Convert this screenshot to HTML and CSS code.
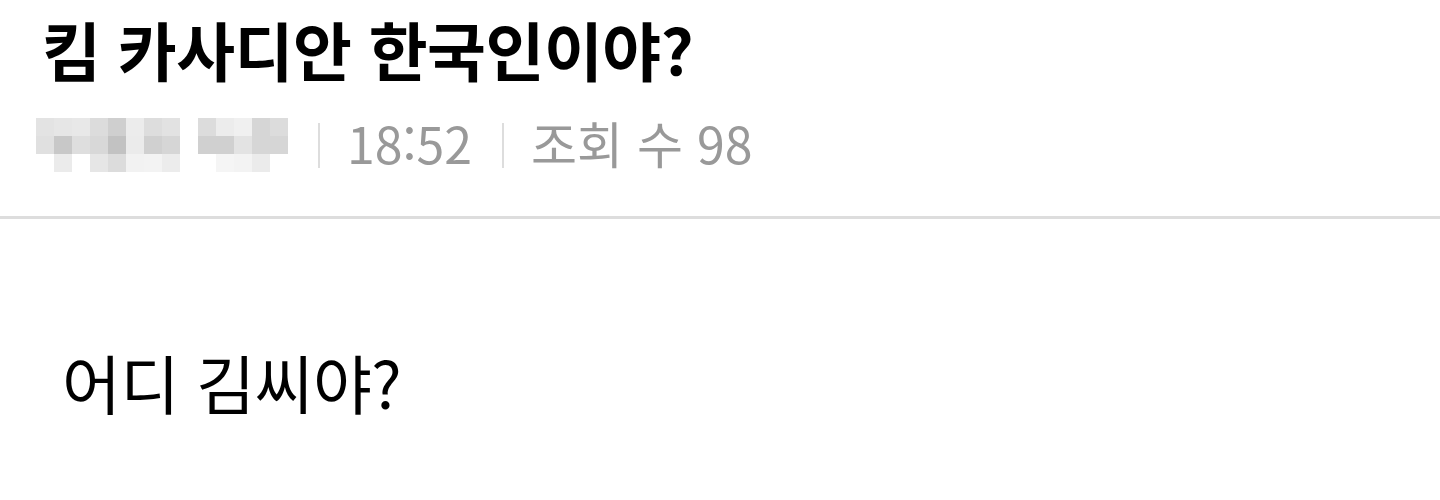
FILE: index.html
```html
<!DOCTYPE html>
<html lang="ko">
<head>
    <meta charset="UTF-8">
    <title>킴 카사디안 한국인이야?</title>
    <link rel="stylesheet" href="styles.css">
</head>
<body>
    <div class="post-header">
        <h1 class="post-title">킴 카사디안 한국인이야?</h1>
        <div class="post-meta">
            <div class="author-blur">
                <div class="mosaic mosaic-a">
                    <span style="background:#e3e3e3"></span><span style="background:#e6e6e6"></span><span style="background:#e8e8e8"></span><span style="background:#dcdcdc"></span><span style="background:#cfcfcf"></span><span style="background:#ececec"></span><span style="background:#dddddd"></span><span style="background:#e2e2e2"></span>
                    <span style="background:#e0e0e0"></span><span style="background:#c8c8c8"></span><span style="background:#dedede"></span><span style="background:#d8d8d8"></span><span style="background:#c2c2c2"></span><span style="background:#ebebeb"></span><span style="background:#d0d0d0"></span><span style="background:#d6d6d6"></span>
                    <span></span><span style="background:#ebebeb"></span><span></span><span style="background:#e6e6e6"></span><span style="background:#dcdcdc"></span><span style="background:#f2f2f2"></span><span style="background:#f3f3f3"></span><span style="background:#ececec"></span>
                </div>
                <div class="mosaic mosaic-b">
                    <span style="background:#dcdcdc"></span><span style="background:#ececec"></span><span style="background:#f0f0f0"></span><span style="background:#d6d6d6"></span><span style="background:#dcdcdc"></span>
                    <span style="background:#d0d0d0"></span><span style="background:#d0d0d0"></span><span style="background:#e3e3e3"></span><span style="background:#d6d6d6"></span><span style="background:#d6d6d6"></span>
                    <span></span><span style="background:#f5f5f5"></span><span style="background:#f3f3f3"></span><span style="background:#ebebeb"></span><span></span>
                </div>
            </div>
            <span class="sep"></span>
            <span class="meta-item">18:52</span>
            <span class="sep"></span>
            <span class="meta-item">조회 수 98</span>
        </div>
    </div>
    <div class="post-body">
        <p>어디 김씨야?</p>
    </div>
</body>
</html>
```

FILE: styles.css
```css
body {
    margin: 0;
    background: #fff;
    font-family: "Noto Sans CJK KR", "Noto Sans", sans-serif;
    color: #000;
}

.post-header {
    padding: 10px 0 0 42px;
    height: 219px;
    border-bottom: 3px solid #dddddd;
    box-sizing: border-box;
}

.post-title {
    margin: 0;
    font-size: 64px;
    font-weight: 700;
    line-height: 76px;
    letter-spacing: -0.5px;
}

.post-meta {
    display: flex;
    align-items: center;
    margin-top: 32px;
    margin-left: -6px;
    height: 54px;
}

.author-blur {
    display: flex;
    gap: 18px;
}

.mosaic {
    display: grid;
    grid-auto-rows: 18px;
}

.mosaic-a {
    grid-template-columns: repeat(8, 18px);
}

.mosaic-b {
    grid-template-columns: repeat(5, 18px);
}

.sep {
    width: 2px;
    height: 45px;
    background: #dddddd;
    margin: 0 27px 0 30px;
}

.meta-item {
    font-size: 50px;
    color: #999999;
    padding-bottom: 6px;
}

.post-body {
    padding: 124px 0 0 62px;
}

.post-body p {
    margin: 0;
    font-size: 64px;
    line-height: 76px;
    letter-spacing: -0.5px;
}
```
